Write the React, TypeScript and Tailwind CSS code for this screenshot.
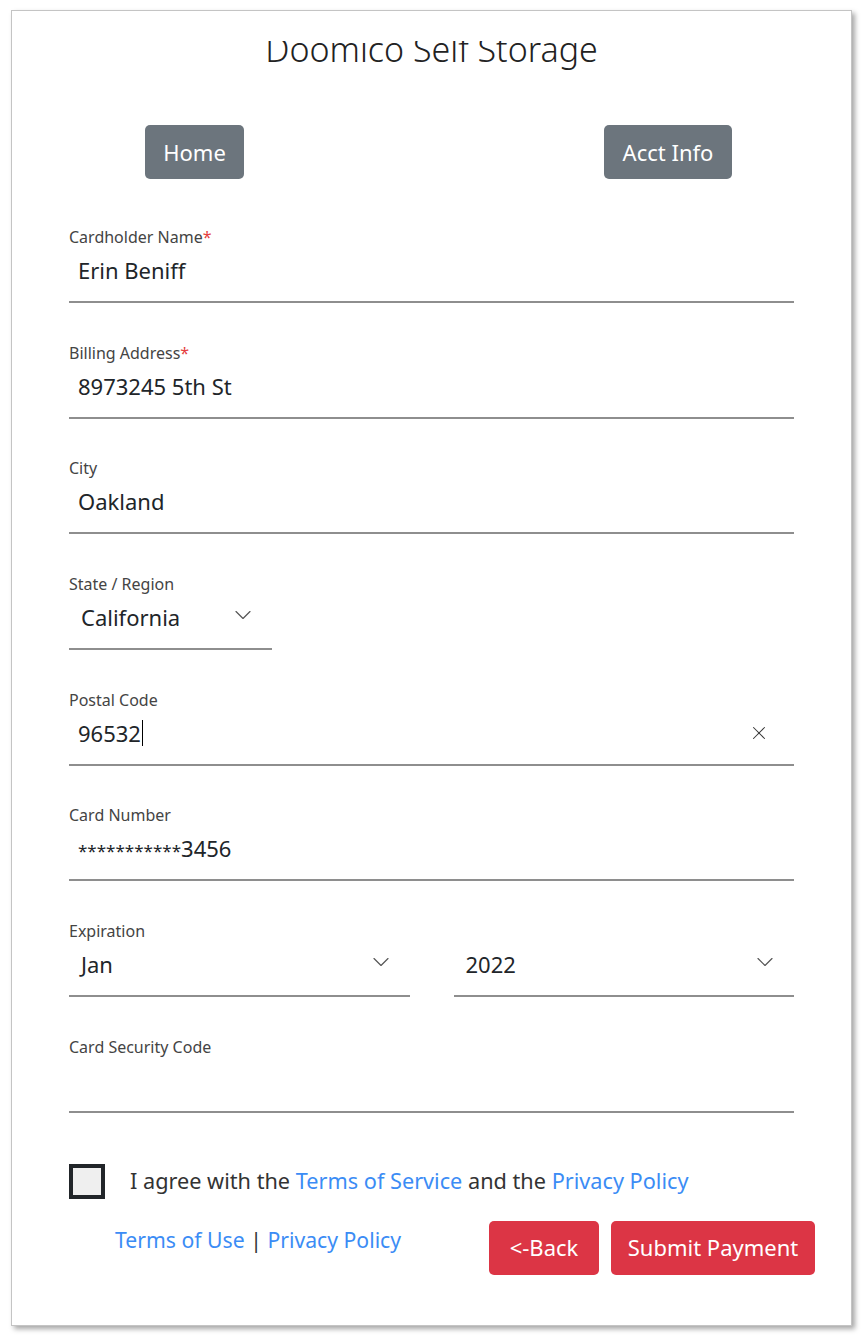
import { X, ChevronDown } from 'lucide-react';

const font = { fontFamily: '"Noto Sans", "Open Sans", sans-serif' };

function Label({ text, required }: { text: string; required?: boolean }) {
  return (
    <div className="h-[20px] text-[16px] leading-[20px] text-[#444]">
      {text}
      {required && <span className="text-[#e53e3e]">*</span>}
    </div>
  );
}

function TextField({ label, value, required, cursor, clear, stars }: { label: string; value?: string; required?: boolean; cursor?: boolean; clear?: boolean; stars?: string }) {
  return (
    <div className="h-[115.7px]">
      <Label text={label} required={required} />
      <div className="flex h-[56px] items-start pt-[6px] pl-[9px] pr-[24px] border-b-2 border-[#8e8e8e]">
        <span className="text-[22px] leading-[34px] text-[#212529]">
          {stars && <span className="text-[17px]">{stars}</span>}
          {value}
        </span>
        {cursor && <span className="ml-[1px] mt-[4px] h-[26px] w-[1px] bg-black" />}
        {clear && <X className="ml-auto mt-[6px] h-[22px] w-[22px] text-[#333]" strokeWidth={1.1} />}
      </div>
    </div>
  );
}

function SelectBox({ value, className }: { value: string; className: string }) {
  return (
    <div className={`flex h-[56px] items-start pt-[6px] pl-[12px] pr-[15px] border-b-2 border-[#8e8e8e] ${className}`}>
      <span className="text-[22px] leading-[34px] text-[#212529]">{value}</span>
      <ChevronDown className="ml-auto mt-[1px] h-[28px] w-[28px] text-[#555]" strokeWidth={1} />
    </div>
  );
}

export default function App() {
  return (
    <div className="min-h-[1336px] bg-white pt-[10px] pl-[11px]" style={font}>
      <div className="w-[841px] h-[1316px] border border-[#c4c4c4] bg-white shadow-[3px_3px_5px_rgba(0,0,0,0.35)]">
        <div className="h-[30px]" />
        <div className="h-[40px] overflow-hidden">
          <h1 className="-mt-[15px] text-center text-[34px] leading-[46px] font-light text-[#222]">
            Doomico Self Storage
          </h1>
        </div>

        <div className="mt-[44px] flex">
          <button className="ml-[133px] h-[54px] w-[99px] rounded-[5px] bg-[#6c757d] text-[22px] text-white">Home</button>
          <button className="ml-auto mr-[119px] h-[54px] w-[128px] rounded-[5px] bg-[#6c757d] text-[22px] text-white">Acct Info</button>
        </div>

        <div className="mt-[48px] px-[57px]">
          <TextField label="Cardholder Name" value="Erin Beniff" required />
          <TextField label="Billing Address" value="8973245 5th St" required />
          <TextField label="City" value="Oakland" />
          <div className="h-[115.7px]">
            <Label text="State / Region" />
            <SelectBox value="California" className="w-[203px]" />
          </div>
          <TextField label="Postal Code" value="96532" cursor clear />
          <TextField label="Card Number" stars="***********" value="3456" />
          <div className="h-[115.7px]">
            <Label text="Expiration" />
            <div className="flex gap-[44px]">
              <SelectBox value="Jan" className="w-[341px]" />
              <SelectBox value="2022" className="w-[341px]" />
            </div>
          </div>
          <TextField label="Card Security Code" />

          <div className="mt-[11px] flex items-center">
            <span className="h-[35px] w-[36px] border-[4px] border-[#212529] bg-[#efefef]" />
            <span className="ml-[25px] text-[21.7px] text-[#333]">
              I agree with the <a className="text-[#3b8cf5]">Terms of Service</a> and the{' '}
              <a className="text-[#3b8cf5]">Privacy Policy</a>
            </span>
          </div>

          <div className="mt-[22px] flex items-start">
            <div className="ml-[46px] text-[21.2px] leading-[38px] text-[#333]">
              <a className="text-[#3b8cf5]">Terms of Use</a> | <a className="text-[#3b8cf5]">Privacy Policy</a>
            </div>
            <button className="ml-auto h-[54px] w-[110px] rounded-[5px] bg-[#dc3545] text-[22px] text-white">&lt;-Back</button>
            <button className="ml-[12px] -mr-[21px] h-[54px] w-[204px] rounded-[5px] bg-[#dc3545] text-[22px] text-white">Submit Payment</button>
          </div>
        </div>
      </div>
    </div>
  );
}
